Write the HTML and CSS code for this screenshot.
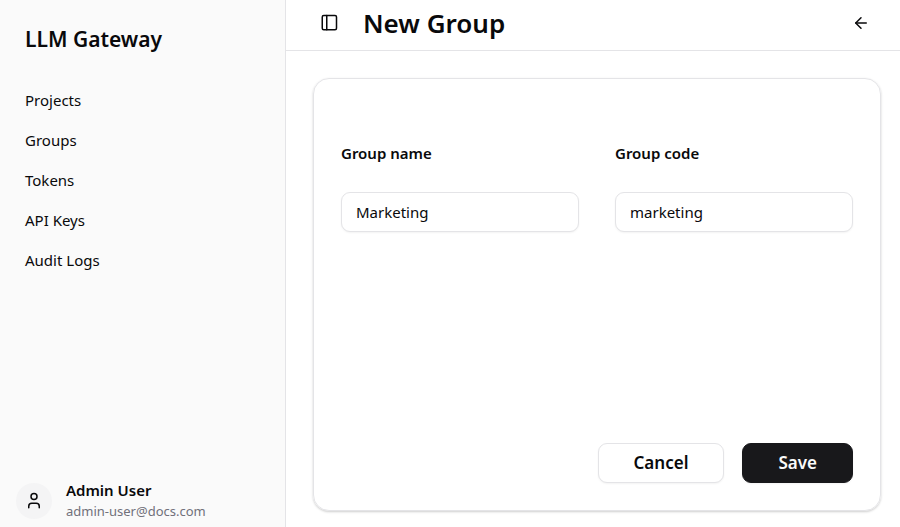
FILE: index.html
```html
<!DOCTYPE html>
<html lang="en">
<head>
    <meta charset="UTF-8">
    <meta name="viewport" content="width=device-width, initial-scale=1.0">
    <title>New Group - LLM Gateway</title>
    <link rel="stylesheet" href="styles.css">
</head>
<body>
    <aside class="sidebar">
        <h2 class="brand">LLM Gateway</h2>
        <nav class="menu">
            <a href="#projects">Projects</a>
            <a href="#groups">Groups</a>
            <a href="#tokens">Tokens</a>
            <a href="#api-keys">API Keys</a>
            <a href="#audit-logs">Audit Logs</a>
        </nav>
        <div class="user">
            <span class="avatar">
                <svg class="icon" viewBox="0 0 24 24" aria-hidden="true">
                    <circle cx="12" cy="6" r="4"/>
                    <path d="M5 21v-2a4 4 0 0 1 4-4h6a4 4 0 0 1 4 4v2"/>
                </svg>
            </span>
            <div class="user-info">
                <span class="user-name">Admin User</span>
                <span class="user-email">admin-user@docs.com</span>
            </div>
        </div>
    </aside>

    <main class="content">
        <header class="topbar">
            <button type="button" class="icon-button" aria-label="Toggle sidebar">
                <svg class="icon" viewBox="0 0 24 24" aria-hidden="true">
                    <rect x="3" y="2" width="19" height="19" rx="2"/>
                    <path d="M9 2v19"/>
                </svg>
            </button>
            <h1>New Group</h1>
            <button type="button" class="icon-button back" aria-label="Back">
                <svg class="icon" viewBox="0 0 24 24" aria-hidden="true">
                    <path d="m12 19-7-7 7-7"/>
                    <path d="M19 12H5"/>
                </svg>
            </button>
        </header>

        <form class="card">
            <div class="fields">
                <div class="field">
                    <label for="groupName">Group name</label>
                    <input type="text" id="groupName" value="Marketing">
                </div>
                <div class="field">
                    <label for="groupCode">Group code</label>
                    <input type="text" id="groupCode" value="marketing">
                </div>
            </div>
            <div class="actions">
                <button type="button" class="button">Cancel</button>
                <button type="submit" class="button primary">Save</button>
            </div>
        </form>
    </main>
</body>
</html>
```

FILE: styles.css
```css
* {
    box-sizing: border-box;
}

body {
    display: flex;
    min-height: 100vh;
    margin: 0;
    font-family: "Segoe UI", "Noto Sans", sans-serif;
    font-size: 15px;
    line-height: 20px;
    color: #09090b;
    background-color: #fff;
}

h1, h2 {
    margin: 0;
    font-weight: 600;
}

button, input {
    font: inherit;
    color: inherit;
}

/* Sidebar */
.sidebar {
    display: flex;
    flex-direction: column;
    flex: 0 0 286px;
    padding: 24px 16px 6px;
    background-color: #fafafa;
    border-right: 1px solid #e4e4e7;
}

.brand {
    padding: 0 9px;
    font-size: 21px;
    line-height: 30px;
}

.menu {
    display: flex;
    flex-direction: column;
    gap: 4px;
    margin-top: 28px;
}

.menu a {
    padding: 8px 9px;
    color: inherit;
    text-decoration: none;
}

.user {
    display: flex;
    align-items: center;
    gap: 14px;
    margin-top: auto;
}

.avatar {
    display: flex;
    align-items: center;
    justify-content: center;
    width: 36px;
    height: 36px;
    border-radius: 50%;
    background-color: #f4f4f5;
}

.user-info {
    display: flex;
    flex-direction: column;
    gap: 1px;
}

.user-name {
    font-weight: 600;
}

.user-email {
    font-size: 13px;
    color: #71717a;
}

/* Header */
.content {
    display: flex;
    flex-direction: column;
    flex: 1;
    min-width: 0;
}

.topbar {
    display: flex;
    align-items: center;
    gap: 18px;
    padding: 0 23px 4px 27px;
    height: 51px;
    border-bottom: 1px solid #e4e4e7;
}

.topbar h1 {
    font-size: 26px;
    line-height: 36px;
}

.icon {
    width: 18px;
    height: 18px;
    fill: none;
    stroke: currentColor;
    stroke-width: 2;
    stroke-linecap: round;
    stroke-linejoin: round;
}

.icon-button {
    display: flex;
    align-items: center;
    justify-content: center;
    width: 32px;
    height: 32px;
    padding: 0;
    border: none;
    border-radius: 8px;
    background: none;
    cursor: pointer;
}

.back {
    margin-left: auto;
}

/* Form */
.card {
    display: flex;
    flex-direction: column;
    flex: 1;
    margin: 27px 19px 16px 27px;
    padding: 64px 27px 27px;
    border: 1px solid #e4e4e7;
    border-radius: 16px;
    box-shadow: 0 1px 3px rgba(0, 0, 0, 0.1), 0 1px 2px rgba(0, 0, 0, 0.1);
}

.fields {
    display: grid;
    grid-template-columns: 1fr 1fr;
    gap: 36px;
}

.field {
    display: flex;
    flex-direction: column;
    gap: 29px;
}

.field label {
    font-weight: 600;
}

.field input {
    width: 100%;
    height: 40px;
    padding: 0 14px;
    border: 1px solid #e4e4e7;
    border-radius: 9px;
    background-color: #fff;
    box-shadow: 0 1px 2px rgba(0, 0, 0, 0.05);
}

.actions {
    display: flex;
    justify-content: flex-end;
    gap: 18px;
    margin-top: auto;
}

.button {
    height: 40px;
    padding: 0 35px;
    border: 1px solid #e4e4e7;
    border-radius: 9px;
    font-size: 17px;
    font-weight: 600;
    background-color: #fff;
    box-shadow: 0 1px 2px rgba(0, 0, 0, 0.05);
    cursor: pointer;
}

.primary {
    border-color: #18181b;
    color: #fafafa;
    background-color: #18181b;
}
```
